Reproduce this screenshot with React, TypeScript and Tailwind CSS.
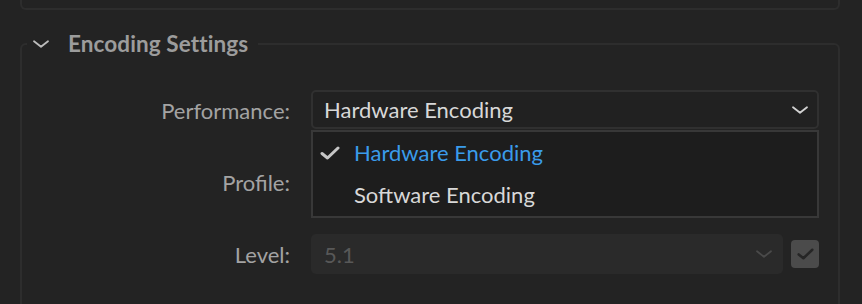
import React from "react";

const Chevron = ({ className }: { className: string }) => (
  <svg viewBox="0 0 16 8" className={className} fill="none" stroke="currentColor" strokeWidth="1.8" strokeLinecap="round" strokeLinejoin="round">
    <path d="M1 1.2 L8 6.8 L15 1.2" />
  </svg>
);

const Check = ({ className }: { className: string }) => (
  <svg viewBox="0 0 20 14" className={className} fill="none" stroke="currentColor" strokeWidth="3" strokeLinecap="round" strokeLinejoin="round">
    <path d="M2 7.5 L7.5 12 L18 2" />
  </svg>
);

const Label = ({ children }: { children: React.ReactNode }) => (
  <div className="flex h-[40px] items-center justify-end text-[22px] text-[#a3a3a3]">{children}</div>
);

const App = () => {
  return (
    <div className="min-h-screen w-full bg-[#232323] pl-[20px] pr-[22px] font-['Lato',sans-serif]">
      <div className="h-[10px] rounded-b-[6px] border-x-2 border-b-2 border-[#2d2d2d]" />

      <fieldset className="mt-[19px] rounded-[6px] border-2 border-[#2d2d2d] pb-[40px] pr-[19px] pt-[31px]">
        <legend className="ml-[5px] flex h-[30px] items-center pl-[6px] pr-[10px]">
          <Chevron className="h-[8px] w-[16px] text-[#bdbdbd]" />
          <span className="ml-[19px] text-[22.5px] font-bold tracking-[0.1px] text-[#9c9c9c]">Encoding Settings</span>
        </legend>

        <div className="grid grid-cols-[268px_1fr] gap-x-[21px] gap-y-[32px]">
          <Label>Performance:</Label>
          <div className="relative">
            <div className="flex h-[39px] items-center justify-between rounded-[5px] border-2 border-[#303030] bg-[#212121] pl-[11px] pr-[9px] text-[22px] text-[#d8d8d8]">
              <span>Hardware Encoding</span>
              <Chevron className="h-[8px] w-[16px] text-[#d2d2d2]" />
            </div>
            {/* open menu */}
            <div className="absolute left-0 right-0 top-[40px] z-10 border-2 border-[#383838] bg-[#1d1d1d] text-[22px]">
              <div className="flex h-[41px] items-center text-[#3a9bea]">
                <Check className="ml-[7px] h-[14px] w-[20px] text-[#c6c6c6]" />
                <span className="ml-[14px]">Hardware Encoding</span>
              </div>
              <div className="flex h-[43px] items-center pl-[41px] text-[#d8d8d8]">Software Encoding</div>
            </div>
          </div>

          <Label>Profile:</Label>
          <div className="flex items-center gap-[8px]">
            <div className="flex h-[40px] flex-1 items-center justify-end rounded-[5px] bg-[#2a2a2a] pr-[11px]">
              <Chevron className="h-[8px] w-[16px] text-[#d2d2d2]" />
            </div>
            <div className="flex h-[28px] w-[28px] items-center justify-center rounded-[4px] bg-[#4b4b4b]">
              <Check className="h-[12px] w-[17px] text-[#262626]" />
            </div>
          </div>

          <Label>Level:</Label>
          <div className="flex items-center gap-[8px]">
            <div className="flex h-[40px] flex-1 items-center justify-between rounded-[5px] bg-[#2a2a2a] pl-[13px] pr-[11px] text-[22px] text-[#585858]">
              <span>5.1</span>
              <Chevron className="h-[8px] w-[16px] text-[#4a4a4a]" />
            </div>
            <div className="flex h-[28px] w-[28px] items-center justify-center rounded-[4px] bg-[#4b4b4b]">
              <Check className="h-[12px] w-[17px] text-[#262626]" />
            </div>
          </div>
        </div>
      </fieldset>
    </div>
  );
};

export default App;
